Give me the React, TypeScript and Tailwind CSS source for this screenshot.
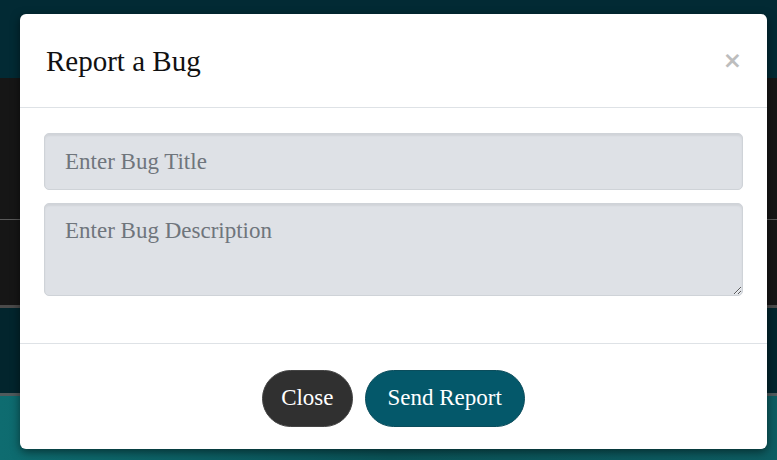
import { useState } from "react";

const serif = "font-['Liberation_Serif','DejaVu_Serif',serif]";

export default function App() {
  const [title, setTitle] = useState("");
  const [desc, setDesc] = useState("");

  return (
    <div className={`relative w-[777px] h-[460px] overflow-hidden ${serif}`}>
      {/* page behind the dimmed backdrop */}
      <div className="flex flex-col h-full">
        <div className="h-[78px] bg-[#022a34]" />
        <div className="h-[142px] bg-[#161616] border-b border-[#5a5a5a]" />
        <div className="h-[88px] bg-[#161616] border-b-[3px] border-[#4a4a4a]" />
        <div className="h-[88px] bg-[#02252d] border-b-[3px] border-[#4f5a5c]" />
        <div className="flex-1 bg-gradient-to-r from-[#0e6c70] via-[#0a5358] to-[#0d5d62]" />
      </div>

      {/* modal */}
      <div className="absolute left-[20px] top-[14px] w-[747px] h-[435px] bg-white rounded-[6px] shadow-[0_3px_10px_rgba(0,0,0,0.5)] flex flex-col">
        {/* Header */}
        <div className="h-[94px] flex items-center justify-between pl-[26px] pr-[25px] border-b border-[#dee2e6] pt-[2px]">
          <h2 className="text-[29px] text-[#111] leading-none">Report a Bug</h2>
          <button className="text-[#bdbdbd] text-[23px] font-bold leading-none font-['DejaVu_Sans',sans-serif] -mt-[2px]">
            ×
          </button>
        </div>

        {/* Body */}
        <div className="flex-1 flex flex-col gap-[13px] px-[24px] pt-[25px]">
          <input
            value={title}
            onChange={(e) => setTitle(e.target.value)}
            placeholder="Enter Bug Title"
            className={`h-[57px] w-full rounded-[5px] bg-[#dee1e6] border border-[#cfd3d8] shadow-[inset_0_2px_2px_rgba(0,0,0,0.06)] px-[20px] text-[23px] text-[#333] placeholder:text-[#6f757c] outline-none ${serif}`}
          />
          <textarea
            value={desc}
            onChange={(e) => setDesc(e.target.value)}
            placeholder="Enter Bug Description"
            className={`h-[93px] w-full rounded-[5px] bg-[#dee1e6] border border-[#cfd3d8] shadow-[inset_0_2px_2px_rgba(0,0,0,0.06)] px-[20px] pt-[12px] text-[23px] leading-[30px] text-[#333] placeholder:text-[#6f757c] outline-none ${serif}`}
          />
        </div>

        {/* Footer */}
        <div className="h-[106px] border-t border-[#dee2e6] flex items-center justify-center gap-[12px] pt-[3px]">
          <button className="h-[57px] px-[18px] rounded-full bg-[#303030] border border-[#444] text-white text-[23px]">
            Close
          </button>
          <button className="h-[57px] px-[22px] rounded-full bg-[#04586a] border border-[#0b4d5c] text-white text-[23px]">
            Send Report
          </button>
        </div>
      </div>
    </div>
  );
}
